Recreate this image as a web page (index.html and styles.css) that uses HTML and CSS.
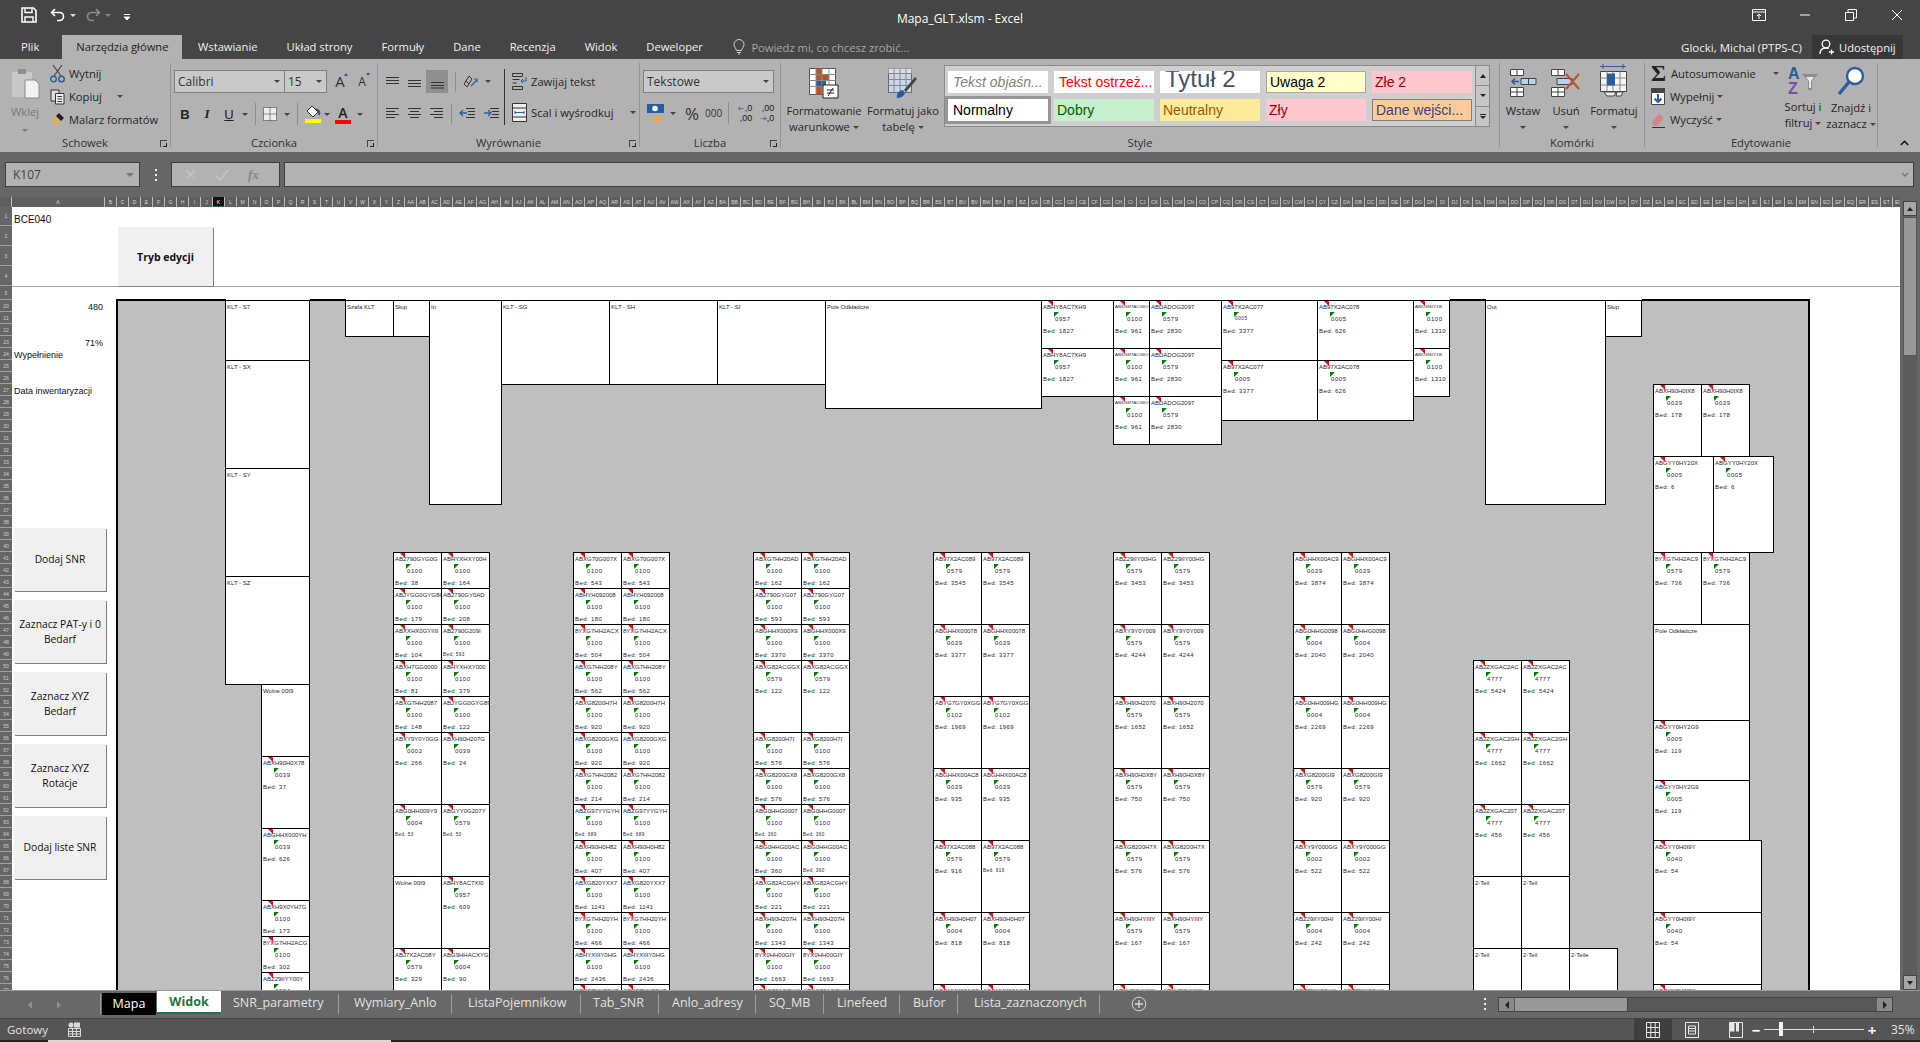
FILE: index.html
```html
<!DOCTYPE html>
<html lang="pl">
<head>
<meta charset="utf-8">
<title>Mapa_GLT.xlsm - Excel</title>
<link rel="stylesheet" href="styles.css">
</head>
<body>
<div class="app">

<header class="titlebar">
  <div class="qat">
    <svg class="wh" width="16" height="16" viewBox="0 0 16 16"><path d="M1 1h11.500L15 3.500V15H1z" stroke-width="1.600"/><path d="M4 1.500v4h7v-4M4 15v-5h8v5" stroke-width="1.400"/></svg>
    <svg class="wh undo" width="16" height="14" viewBox="0 0 16 14"><path d="M5 1L1.500 4.500 5 8M2 4.500h7.500a4 4 0 0 1 0 8H7" stroke-width="1.600"/></svg>
    <i class="caret lt"></i>
    <svg class="dim redo" width="16" height="14" viewBox="0 0 16 14"><path d="M11 1l3.500 3.500L11 8M14 4.500H6.500a4 4 0 0 0 0 8H9" stroke-width="1.600"/></svg>
    <i class="caret dimc"></i>
    <svg class="wh cust" width="8" height="8" viewBox="0 0 8 8"><path d="M1 1.500h6" stroke-width="1"/><path d="M1 4h6L4 7z" fill="#fff"/></svg>
  </div>
  <div class="doc-title">Mapa_GLT.xlsm - Excel</div>
  <div class="winctl">
    <span class="wbtn"><svg class="wh" width="14" height="12" viewBox="0 0 14 12"><path d="M.5.500h13v11H.5zM.5 3h13M7 10V5M5 7l2-2 2 2"/></svg></span>
    <span class="wbtn"><svg class="wh" width="12" height="12" viewBox="0 0 12 12"><path d="M1 6h10"/></svg></span>
    <span class="wbtn"><svg class="wh" width="12" height="12" viewBox="0 0 12 12"><path d="M.5 3.500h8v8h-8zM3 3.500V.5h8.500V9H8.500"/></svg></span>
    <span class="wbtn"><svg class="wh" width="12" height="12" viewBox="0 0 12 12"><path d="M1 1l10 10M11 1L1 11"/></svg></span>
  </div>
</header>

<nav class="tabs">
  <span class="tab plik">Plik</span>
  <span class="tab active">Narzędzia główne</span>
  <span class="tab">Wstawianie</span>
  <span class="tab">Układ strony</span>
  <span class="tab">Formuły</span>
  <span class="tab">Dane</span>
  <span class="tab">Recenzja</span>
  <span class="tab">Widok</span>
  <span class="tab">Deweloper</span>
  <svg class="bulb" width="12" height="16" viewBox="0 0 12 16"><path d="M3.500 11.500C3 9 1 8 1 5.500a5 5 0 0 1 10 0c0 2.500-2 3.500-2.500 6zM4 13.500h4M5 15h2" fill="none" stroke="#cfcfcf"/></svg>
  <span class="tell">Powiedz mi, co chcesz zrobić...</span>
  <span class="user">Glocki, Michal (PTPS-C)</span>
  <span class="share">
    <svg width="16" height="16" viewBox="0 0 16 16"><circle cx="7" cy="5" r="3.800" fill="none" stroke="#fff" stroke-width="1.300"/><path d="M1 15c0-4 2.500-6 6-6 1 0 2 .2 2.700.6M10 13h5M12.500 10.500v5" fill="none" stroke="#fff" stroke-width="1.300"/></svg>
    Udostępnij
  </span>
</nav>

<section class="ribbon">
  <div class="rgroup g-clip">
    <div class="rbody clip">
      <div class="paste">
        <svg width="30" height="32" viewBox="0 0 30 32"><path d="M2 5h20v25H2z" fill="#c8c8c8"/><path d="M8 2h8v5H8z" fill="#8f8f8f"/><path d="M15 13h10l4 4v14H15z" fill="#f2f2f2" stroke="#8a8a8a"/></svg>
        <span class="big-lbl off">Wklej</span>
        <i class="caret offc"></i>
      </div>
      <div class="cliplist">
        <span class="rrow"><svg width="15" height="19" viewBox="0 0 15 19"><path d="M3 1l8 11M12 1L4 12" fill="none" stroke="#444" stroke-width="1.200"/><circle cx="3.500" cy="15" r="2.800" fill="none" stroke="#2b5c9e" stroke-width="1.400"/><circle cx="11.500" cy="15" r="2.800" fill="none" stroke="#2b5c9e" stroke-width="1.400"/></svg>Wytnij</span>
        <span class="rrow"><svg width="15" height="16" viewBox="0 0 15 16"><path d="M1 1h8v11H1z" fill="#ddd" stroke="#333"/><path d="M5.500 4.500H14V15H5.500z" fill="#eee" stroke="#333"/><path d="M7.500 7.500h4.500M7.500 10h4.500M7.500 12.500h4.500" stroke="#333"/></svg>Kopiuj<i class="caret m8"></i></span>
        <span class="rrow"><svg width="15" height="15" viewBox="0 0 15 15"><path d="M1 9l5-5 5 5-4 5-3-1-1-2-2-1z" fill="#d9b06a"/><path d="M6 4l3-3 5 5-3 3z" fill="#222"/></svg>Malarz formatów</span>
      </div>
    </div>
    <div class="rlabel">Schowek</div>
    <i class="launcher"></i>
  </div>

  <div class="rgroup g-font">
    <div class="rbody stackb">
      <div class="frow1">
        <span class="combo fname">Calibri<i class="caret"></i></span><span class="combo fsize">15<i class="caret"></i></span>
        <span class="grow">A<i class="tri up"></i></span><span class="grow small">A<i class="tri down"></i></span>
      </div>
      <div class="frow2">
        <b class="fmt">B</b><em class="fmt">I</em><u class="fmt">U</u><i class="caret"></i><i class="vsep"></i>
        <svg class="border-ic" width="14" height="14" viewBox="0 0 14 14"><path d="M.5.500h13v13H.5zM7 .5v13M.5 7h13" fill="#eee" stroke="#333" stroke-dasharray="1 1"/></svg><i class="caret"></i><i class="vsep"></i>
        <svg class="fill-ic" width="16" height="18" viewBox="0 0 16 18"><path d="M7 1l6 6-5 5-6-6z" fill="#fff" stroke="#333"/><path d="M11 4c3 1 4 3 3 6" fill="none" stroke="#2b5c9e" stroke-width="2"/><path d="M0 14h16v4H0z" fill="#ff0"/></svg><i class="caret"></i>
        <span class="fontcolor">A</span><i class="caret"></i>
      </div>
    </div>
    <div class="rlabel">Czcionka</div>
    <i class="launcher"></i>
  </div>

  <div class="rgroup g-align">
    <div class="rbody alignbody">
      <div class="aligngrid">
        <div class="arow first">
          <svg class="ln" width="15" height="14" viewBox="0 0 15 14"><path d="M1 2.500h13M1 5.500h13M1 8.500h13"/></svg>
          <svg class="ln" width="15" height="14" viewBox="0 0 15 14"><path d="M1 5.500h13M1 8.500h13M1 11.500h13"/></svg>
          <span class="on"><svg class="ln" width="15" height="14" viewBox="0 0 15 14"><path d="M1 7.500h13M1 10.500h13M1 13h13"/></svg></span>
          <i class="vsep"></i>
          <svg width="15" height="15" viewBox="0 0 15 15"><path d="M1 10l5-8 3 3-5 8zM3 7l3 3" fill="none" stroke="#333"/><path d="M8 12l6-6M11 5h3v3" fill="none" stroke="#2b5c9e" stroke-width="1.200"/></svg><i class="caret"></i>
        </div>
        <div class="arow">
          <svg class="ln" width="15" height="13" viewBox="0 0 15 13"><path d="M1 1.500h13M1 4.500h9M1 7.500h13M1 10.500h9"/></svg>
          <svg class="ln" width="15" height="13" viewBox="0 0 15 13"><path d="M1 1.500h13M3 4.500h9M1 7.500h13M3 10.500h9"/></svg>
          <svg class="ln" width="15" height="13" viewBox="0 0 15 13"><path d="M1 1.500h13M5 4.500h9M1 7.500h13M5 10.500h9"/></svg>
          <i class="vsep second"></i>
          <svg width="17" height="13" viewBox="0 0 17 13"><path d="M7 1.500h9M9 4.500h7M9 7.500h7M7 10.500h9" stroke="#333" fill="none"/><path d="M1 6h7M4 3L1 6l3 3" stroke="#2b5c9e" stroke-width="1.300" fill="none"/></svg>
          <svg width="17" height="13" viewBox="0 0 17 13"><path d="M7 1.500h9M9 4.500h7M9 7.500h7M7 10.500h9" stroke="#333" fill="none"/><path d="M1 6h7M5 3l3 3-3 3" stroke="#2b5c9e" stroke-width="1.300" fill="none"/></svg>
        </div>
      </div>
      <i class="blacksep"></i>
      <div class="wrapcol">
        <span class="rrow"><svg width="15" height="18" viewBox="0 0 15 18"><path d="M.5 1.500h10v3H.5zM.5 7.500h7M.5 11h4M.5 14.500h10v3H.5z" fill="none" stroke="#333"/><path d="M14 5v4H9M11 7L9 9l2 2" fill="none" stroke="#2b5c9e"/></svg>Zawijaj tekst</span>
        <span class="rrow"><svg width="15" height="19" viewBox="0 0 15 19"><path d="M.5.500h14v18H.5zM.5 5h14M.5 14h14" fill="#eee" stroke="#333"/><path d="M3 9.500h9M3 8v3M12 8v3" stroke="#2b5c9e" fill="none"/></svg>Scal i wyśrodkuj<i class="caret m12"></i></span>
      </div>
    </div>
    <div class="rlabel">Wyrównanie</div>
    <i class="launcher"></i>
  </div>

  <div class="rgroup g-num">
    <div class="rbody stackb">
      <span class="combo fmtbox">Tekstowe<i class="caret"></i></span>
      <div class="nrow">
        <svg width="18" height="20" viewBox="0 0 18 20"><path d="M0 1h17v9H0z" fill="#2b5c9e"/><circle cx="8" cy="5.500" r="2.800" fill="#fff"/><path d="M6 13h8M6 15.500h8M6 18h8" stroke="#e0a75e" stroke-width="2"/></svg><i class="caret"></i>
        <span class="pct">%</span><span class="thou">000</span><i class="vsep"></i>
        <span class="dec"><span class="dl"><span class="arw">←</span>,0</span><span class="dl">,00</span></span>
        <span class="dec"><span class="dl">,00</span><span class="dl"><span class="arw">→</span>,0</span></span>
      </div>
    </div>
    <div class="rlabel">Liczba</div>
    <i class="launcher"></i>
  </div>

  <div class="rgroup g-style">
    <div class="rbody stylebody">
      <div class="bigbtn cf">
        <svg width="30" height="32" viewBox="0 0 30 32"><path d="M.5 1.500h26v26H.5z" fill="#fff" stroke="#555"/><path d="M7 1.500h6v6H7zM7 7.500h13v6H7z" fill="#c0502b"/><path d="M7 13.500h10v6H7z" fill="#2b5c9e"/><path d="M7 19.500h6v8H7z" fill="#c0502b"/><path d="M7 1.500v26M13 1.500v26M20 1.500v26M.5 7.500h26M.5 13.500h26M.5 19.500h26" fill="none" stroke="#888"/><path d="M14 18h15v13H14z" fill="#fff" stroke="#222"/><path d="M18 23h7M18 26h7M24 21l-5 8" stroke="#222" fill="none"/></svg>
        <span class="big-lbl">Formatowanie<br>warunkowe<i class="caret m3"></i></span>
      </div>
      <div class="bigbtn ft">
        <svg width="30" height="32" viewBox="0 0 30 32"><path d="M.5 1.500h23v24H.5z" fill="#c9d7ea" stroke="#666"/><path d="M.5 1.500h23v5H.5z" fill="#ddd"/><path d="M6 1.500v24M12 1.500v24M18 1.500v24M.5 6.500h23M.5 12.500h23M.5 18.500h23" fill="none" stroke="#888"/><path d="M9 31c-1-4 2-8 6-8l2 3c-1 3-4 5-8 5z" fill="#2b5c9e"/><path d="M16 23l11-13 2 2-11 13z" fill="#444"/></svg>
        <span class="big-lbl">Formatuj jako<br>tabelę<i class="caret m3"></i></span>
      </div>
      <div class="gallery">
        <div class="gcells">
          <span class="gc note-st">Tekst objaśn...</span>
          <span class="gc warn-st">Tekst ostrzeż...</span>
          <span class="gc title-st">Tytuł 2</span>
          <span class="gc att-st">Uwaga 2</span>
          <span class="gc bad-st">Złe 2</span>
          <span class="gc norm-st">Normalny</span>
          <span class="gc good-st">Dobry</span>
          <span class="gc neut-st">Neutralny</span>
          <span class="gc bad-st">Zły</span>
          <span class="gc input-st">Dane wejści...</span>
        </div>
        <div class="gscroll">
          <span class="gs1"><i class="caret up"></i></span>
          <span class="gs2"><i class="caret"></i></span>
          <span class="gs3"><i class="bar"></i><i class="caret"></i></span>
        </div>
      </div>
    </div>
    <div class="rlabel">Style</div>
  </div>

  <div class="rgroup g-cells">
    <div class="rbody cellsbody">
      <div class="bigbtn wstaw">
        <svg width="27" height="32" viewBox="0 0 27 32"><path d="M.5 3.500h13v6H.5zM7 3.500v6M.5 21.500h13v9H.5zM7 21.500v9M.5 26h13" fill="#fff" stroke="#444"/><path d="M11 12.500h15v6H11zM18.500 12.500v6" fill="#bcd2ec" stroke="#444"/><path d="M9 15.500H2M5 12.500l-3 3 3 3" fill="none" stroke="#2b5c9e" stroke-width="1.500"/></svg>
        <span class="big-lbl">Wstaw</span><i class="caret"></i>
      </div>
      <div class="bigbtn usun">
        <svg width="30" height="32" viewBox="0 0 30 32"><path d="M.5 3.500h13v6H.5zM7 3.500v6M.5 21.500h13v9H.5zM7 21.500v9M.5 26h13" fill="#fff" stroke="#444"/><path d="M6 12.500h15v6H6z" fill="#bcd2ec" stroke="#444"/><path d="M15 8l13 15M28 8L15 23" fill="none" stroke="#c0502b" stroke-width="2"/></svg>
        <span class="big-lbl">Usuń</span><i class="caret"></i>
      </div>
      <div class="bigbtn formatuj">
        <svg width="30" height="36" viewBox="0 0 30 36"><path d="M1 3.500h26M4 1v5M24 1v5M8 3.500l-3 0" stroke="#2b5c9e" fill="none"/><path d="M1.500 8.500h26v20h-26z" fill="#f4f4f4" stroke="#444"/><path d="M8 8.500v20M14 8.500v20M21 8.500v20M1.500 15h26M1.500 22h26" stroke="#888" fill="none"/><path d="M8 10.500h8v12H8z" fill="#2b5c9e"/><path d="M5 29h12l-2 4H8zM18 29h6l-2 4h-5z" fill="#eee" stroke="#444"/></svg>
        <span class="big-lbl">Formatuj</span><i class="caret"></i>
      </div>
    </div>
    <div class="rlabel">Komórki</div>
  </div>

  <div class="rgroup g-edit">
    <div class="rbody editbody">
      <div class="editlist">
        <span class="rrow"><span class="sigma">Σ</span>Autosumowanie<i class="caret m12"></i></span>
        <span class="rrow"><svg width="14" height="17" viewBox="0 0 14 17"><path d="M0 0h14v4H0z" fill="#444"/><path d="M.5 4.500h13v12H.5z" fill="#fff" stroke="#444"/><path d="M7 6v8M3.500 10.500L7 14l3.500-3.500" fill="none" stroke="#2b5c9e" stroke-width="2"/></svg>Wypełnij<i class="caret tight"></i></span>
        <span class="rrow"><svg width="14" height="16" viewBox="0 0 14 16"><path d="M1 10l7-8 5 4-7 8H3z" fill="#d9818d"/><path d="M1 15.500h13" stroke="#333"/></svg>Wyczyść<i class="caret tight"></i></span>
      </div>
      <div class="bigbtn sort">
        <span class="az"><span class="az-a">A</span><span class="az-z">Z</span><svg width="18" height="18" viewBox="0 0 18 18"><path d="M1 1h16l-6 7v9H7V8z" fill="#8d8d8d"/><path d="M5 4h8l-3 4v7H8V8z" fill="#e8e8e8"/></svg></span>
        <span class="big-lbl">Sortuj i<br>filtruj<i class="caret m3"></i></span>
      </div>
      <div class="bigbtn find">
        <svg width="28" height="30" viewBox="0 0 28 30"><circle cx="18" cy="10" r="8" fill="#fff" stroke="#2b5c9e" stroke-width="2.400"/><path d="M12 16L2 28" stroke="#2b5c9e" stroke-width="3.400"/></svg>
        <span class="big-lbl">Znajdź i<br>zaznacz<i class="caret m3"></i></span>
      </div>
    </div>
    <div class="rlabel">Edytowanie</div>
  </div>
  <svg class="collapse" width="9" height="6" viewBox="0 0 9 6"><path d="M.8 5l3.700-3.700L8.200 5" fill="none" stroke="#111" stroke-width="1.600"/></svg>
</section>

<section class="formula">
  <div class="namebox">K107<i class="caret"></i></div>
  <div class="fdots"><i></i><i></i><i></i></div>
  <div class="fbtns">
    <svg width="11" height="11" viewBox="0 0 11 11"><path d="M1 1l9 9M10 1l-9 9" stroke="#c2c2c2" stroke-width="1.500"/></svg>
    <svg width="14" height="12" viewBox="0 0 14 12"><path d="M1 7l4 4 8-10" fill="none" stroke="#c2c2c2" stroke-width="1.800"/></svg>
    <span class="fx">fx</span>
  </div>
  <div class="fbar"><svg width="8" height="6" viewBox="0 0 8 6"><path d="M1 1l3 3 3-3" fill="none" stroke="#777" stroke-width="1.500"/></svg></div>
</section>

<section class="workbook">
  <div class="pane">
    <div class="colhdr">
      <span class="corner"></span><span class="col-a">A</span><span>B</span><span>C</span><span>D</span><span>E</span><span>F</span><span>G</span><span>H</span><span>I</span><span>J</span><span class="sel">K</span><span>L</span><span>M</span><span>N</span><span>O</span><span>P</span><span>Q</span><span>R</span><span>S</span><span>T</span><span>U</span><span>V</span><span>W</span><span>X</span><span>Y</span><span>Z</span>
      <span>AA</span><span>AB</span><span>AC</span><span>AD</span><span>AE</span><span>AF</span><span>AG</span><span>AH</span><span>AI</span><span>AJ</span><span>AK</span><span>AL</span><span>AM</span><span>AN</span><span>AO</span><span>AP</span><span>AQ</span><span>AR</span><span>AS</span><span>AT</span><span>AU</span><span>AV</span><span>AW</span><span>AX</span><span>AY</span><span>AZ</span>
      <span>BA</span><span>BB</span><span>BC</span><span>BD</span><span>BE</span><span>BF</span><span>BG</span><span>BH</span><span>BI</span><span>BJ</span><span>BK</span><span>BL</span><span>BM</span><span>BN</span><span>BO</span><span>BP</span><span>BQ</span><span>BR</span><span>BS</span><span>BT</span><span>BU</span><span>BV</span><span>BW</span><span>BX</span><span>BY</span><span>BZ</span>
      <span>CA</span><span>CB</span><span>CC</span><span>CD</span><span>CE</span><span>CF</span><span>CG</span><span>CH</span><span>CI</span><span>CJ</span><span>CK</span><span>CL</span><span>CM</span><span>CN</span><span>CO</span><span>CP</span><span>CQ</span><span>CR</span><span>CS</span><span>CT</span><span>CU</span><span>CV</span><span>CW</span><span>CX</span><span>CY</span><span>CZ</span>
      <span>DA</span><span>DB</span><span>DC</span><span>DD</span><span>DE</span><span>DF</span><span>DG</span><span>DH</span><span>DI</span><span>DJ</span><span>DK</span><span>DL</span><span>DM</span><span>DN</span><span>DO</span><span>DP</span><span>DQ</span><span>DR</span><span>DS</span><span>DT</span><span>DU</span><span>DV</span><span>DW</span><span>DX</span><span>DY</span><span>DZ</span>
      <span>EA</span><span>EB</span><span>EC</span><span>ED</span><span>EE</span><span>EF</span><span>EG</span><span>EH</span><span>EI</span><span>EJ</span><span>EK</span><span>EL</span><span>EM</span><span>EN</span><span>EO</span><span>EP</span><span>EQ</span><span>ER</span><span>ES</span><span>ET</span><span>EU</span>
    </div>
    <div class="sheetwrap">
      <div class="rowhdr">
        <span class="rh1">1</span><span class="rh2">2</span><span class="rh2">3</span><span class="rh2">4</span><span class="rh5">5</span>
        <span>20</span><span>21</span><span>22</span><span>23</span><span>24</span><span>25</span><span>26</span><span>27</span><span>28</span><span>29</span><span>30</span><span>31</span><span>32</span><span>33</span><span>34</span><span>35</span><span>36</span><span>37</span><span>38</span><span>39</span><span>40</span><span>41</span><span>42</span><span>43</span><span>44</span><span>45</span><span>46</span><span>47</span><span>48</span><span>49</span><span>50</span><span>51</span><span>52</span><span>53</span><span>54</span><span>55</span><span>56</span><span>57</span><span>58</span><span>59</span><span>60</span><span>61</span><span>62</span><span>63</span><span>64</span><span>65</span><span>66</span><span>67</span><span>68</span><span>69</span><span>70</span><span>71</span><span>72</span><span>73</span><span>74</span><span>75</span><span>76</span><span>77</span>
      </div>
      <div class="sheet">
        <div class="frozen">
          <div class="code">BCE040</div>
          <button class="xbtn edit">Tryb edycji</button>
        </div>
        <div class="gap5"></div>
        <div class="content">
          <aside class="side">
            <div class="val">480</div>
            <div class="val v71">71%</div>
            <div class="lab">Wypełnienie</div>
            <div class="lab l-data">Data inwentaryzacji</div>
            <div class="actions">
              <button class="xbtn act">Dodaj SNR</button>
              <button class="xbtn act">Zaznacz PAT-y i 0<br>Bedarf</button>
              <button class="xbtn act">Zaznacz XYZ<br>Bedarf</button>
              <button class="xbtn act">Zaznacz XYZ<br>Rotacje</button>
              <button class="xbtn act">Dodaj liste SNR</button>
            </div>
          </aside>

          <div class="map">
            <div class="grp g-klt">
              <div class="stack w7">
                <div class="slot s5"><span>KLT - S7</span></div>
                <div class="slot s9"><span>KLT - SX</span></div>
                <div class="slot s9"><span>KLT - SY</span></div>
                <div class="slot s9"><span>KLT - SZ</span></div>
              </div>
            </div>
            <div class="grp g-wolne">
              <div class="stack w4">
                <div class="slot s6"><span>Wolne 00I9</span></div>
                <div class="slot s6 part"><span>ABXH90H0X78</span><span>0039</span><span>Bed: 37</span></div>
                <div class="slot s6 part"><span>ABGHHX000YH</span><span>0039</span><span>Bed: 626</span></div>
                <div class="slot s3 part"><span>ABXH9X0YH7G</span><span>0100</span><span>Bed: 173</span></div>
                <div class="slot s3 part"><span>8YXG7HH2ACG</span><span>0100</span><span>Bed: 302</span></div>
                <div class="slot s3 part"><span>ABZ29IIYY00Y</span><span>0004</span><span>Bed: 90</span></div>
              </div>
            </div>
            <div class="grp g-top">
              <div class="stack w4"><div class="slot s3"><span>Szafa KLT</span></div></div>
              <div class="stack w3"><div class="slot s3"><span>Słup</span></div></div>
              <div class="stack w6"><div class="slot s17"><span>In</span></div></div>
              <div class="stack w9"><div class="slot s7"><span>KLT - SG</span></div></div>
              <div class="stack w9"><div class="slot s7"><span>KLT - SH</span></div></div>
              <div class="stack w9"><div class="slot s7"><span>KLT - SI</span></div></div>
              <div class="stack w18"><div class="slot s9"><span>Pole Odkładcze</span></div></div>
            </div>
            <div class="grp g-store">
              <div class="stack w6">
                <div class="slot s4 part"><span>ABHY8AC7XH9</span><span>0957</span><span>Bed: 1827</span></div>
                <div class="slot s4 part"><span>ABHY8AC7XH9</span><span>0957</span><span>Bed: 1827</span></div>
              </div>
              <div class="stack w3">
                <div class="slot s4 part tiny"><span>ABXG8I7ACGIIO</span><span>0100</span><span>Bed: 961</span></div>
                <div class="slot s4 part tiny"><span>ABXG8I7ACGIIO</span><span>0100</span><span>Bed: 961</span></div>
                <div class="slot s4 part tiny"><span>ABXG8I7ACGIIO</span><span>0100</span><span>Bed: 961</span></div>
              </div>
              <div class="stack w6">
                <div class="slot s4 part"><span>ABDADOG2097</span><span>0579</span><span>Bed: 2830</span></div>
                <div class="slot s4 part"><span>ABDADOG2097</span><span>0579</span><span>Bed: 2830</span></div>
                <div class="slot s4 part"><span>ABDADOG2097</span><span>0579</span><span>Bed: 2830</span></div>
              </div>
              <div class="stack w8">
                <div class="slot s5 part"><span>AB97X2AC077</span><span class="mini">0005</span><span>Bed: 3377</span></div>
                <div class="slot s5 part"><span>AB97X2AC077</span><span>0005</span><span>Bed: 3377</span></div>
              </div>
              <div class="stack w8">
                <div class="slot s5 part"><span>AB97X2AC078</span><span>0005</span><span>Bed: 626</span></div>
                <div class="slot s5 part"><span>AB97X2AC078</span><span>0005</span><span>Bed: 626</span></div>
              </div>
              <div class="stack w3">
                <div class="slot s4 part tiny"><span>ABXG8I0Y18I</span><span>0100</span><span>Bed: 1310</span></div>
                <div class="slot s4 part tiny"><span>ABXG8I0Y18I</span><span>0100</span><span>Bed: 1310</span></div>
              </div>
            </div>
            <div class="grp g-out">
              <div class="stack w10"><div class="slot s17"><span>Out</span></div></div>
              <div class="stack w3"><div class="slot s3"><span>Słup</span></div></div>
            </div>

            <div class="grp g-1">
              <div class="stack w4">
                <div class="slot s3 part"><span>AB2790GYG0G</span><span>0100</span><span>Bed: 38</span></div>
                <div class="slot s3 part"><span>ABJYGG0GYG8I</span><span>0100</span><span>Bed: 179</span></div>
                <div class="slot s3 part"><span>ABXXHX0GYII9</span><span>0100</span><span>Bed: 104</span></div>
                <div class="slot s3 part"><span>ABXH7GG0000</span><span>0100</span><span>Bed: 81</span></div>
                <div class="slot s3 part"><span>ABXG7HH2087</span><span>0100</span><span>Bed: 148</span></div>
                <div class="slot s6 part"><span>ABXY9Y0Y0GG</span><span>0002</span><span>Bed: 266</span></div>
                <div class="slot s6 part"><span>ABG0HH009Y9</span><span>0004</span><span class="mini">Bed: 53</span></div>
                <div class="slot s6"><span>Wolne 00I9</span></div>
                <div class="slot s6 part"><span>ABJ7X2AC08Y</span><span>0579</span><span>Bed: 329</span></div>
              </div>
              <div class="stack w4">
                <div class="slot s3 part"><span>ABHYXHXY00H</span><span>0100</span><span>Bed: 164</span></div>
                <div class="slot s3 part"><span>AB2790GY0AD</span><span>0100</span><span>Bed: 208</span></div>
                <div class="slot s3 part"><span>AB2790G209I</span><span>0100</span><span class="mini">Bed: 593</span></div>
                <div class="slot s3 part"><span>ABHYXHXY000</span><span>0100</span><span>Bed: 379</span></div>
                <div class="slot s3 part"><span>ABJYGG0GYG89</span><span>0100</span><span>Bed: 122</span></div>
                <div class="slot s6 part"><span>ABXH90H207G</span><span>0039</span><span>Bed: 24</span></div>
                <div class="slot s6 part"><span>ABGYY0G207Y</span><span>0579</span><span class="mini">Bed: 50</span></div>
                <div class="slot s6 part"><span>ABHY8AC7XI0</span><span>0957</span><span>Bed: 609</span></div>
                <div class="slot s6 part"><span>ABG9HHACXYG</span><span>0004</span><span>Bed: 90</span></div>
              </div>
            </div>

            <div class="grp g-2">
              <div class="stack w4">
                <div class="slot s3 part"><span>ABXG70G007X</span><span>0100</span><span>Bed: 543</span></div>
                <div class="slot s3 part"><span>ABHYH092008</span><span>0100</span><span>Bed: 180</span></div>
                <div class="slot s3 part"><span>8YXG7HH2ACX</span><span>0100</span><span>Bed: 504</span></div>
                <div class="slot s3 part"><span>ABXG7HH208Y</span><span>0100</span><span>Bed: 562</span></div>
                <div class="slot s3 part"><span>ABXG8200H7H</span><span>0100</span><span>Bed: 920</span></div>
                <div class="slot s3 part"><span>ABXG8200GXG</span><span>0100</span><span>Bed: 920</span></div>
                <div class="slot s3 part"><span>ABXG7HH2082</span><span>0100</span><span>Bed: 214</span></div>
                <div class="slot s3 part"><span>ABZG97YYGYH</span><span>0100</span><span class="mini">Bed: 689</span></div>
                <div class="slot s3 part"><span>ABXH90H0H82</span><span>0100</span><span>Bed: 407</span></div>
                <div class="slot s3 part"><span>ABXG820YXX7</span><span>0100</span><span>Bed: 1141</span></div>
                <div class="slot s3 part"><span>8YXG7HH20YH</span><span>0100</span><span>Bed: 466</span></div>
                <div class="slot s3 part"><span>ABHYXIIIY0HG</span><span>0100</span><span>Bed: 2436</span></div>
                <div class="slot s3 part"><span>ABXG7HH20H7</span><span>0100</span><span>Bed: 214</span></div>
              </div>
              <div class="stack w4">
                <div class="slot s3 part"><span>ABXG70G007X</span><span>0100</span><span>Bed: 543</span></div>
                <div class="slot s3 part"><span>ABHYH092008</span><span>0100</span><span>Bed: 180</span></div>
                <div class="slot s3 part"><span>8YXG7HH2ACX</span><span>0100</span><span>Bed: 504</span></div>
                <div class="slot s3 part"><span>ABXG7HH208Y</span><span>0100</span><span>Bed: 562</span></div>
                <div class="slot s3 part"><span>ABXG8200H7H</span><span>0100</span><span>Bed: 920</span></div>
                <div class="slot s3 part"><span>ABXG8200GXG</span><span>0100</span><span>Bed: 920</span></div>
                <div class="slot s3 part"><span>ABXG7HH2082</span><span>0100</span><span>Bed: 214</span></div>
                <div class="slot s3 part"><span>ABZG97YYGYH</span><span>0100</span><span class="mini">Bed: 689</span></div>
                <div class="slot s3 part"><span>ABXH90H0H82</span><span>0100</span><span>Bed: 407</span></div>
                <div class="slot s3 part"><span>ABXG820YXX7</span><span>0100</span><span>Bed: 1141</span></div>
                <div class="slot s3 part"><span>8YXG7HH20YH</span><span>0100</span><span>Bed: 466</span></div>
                <div class="slot s3 part"><span>ABHYXIIIY0HG</span><span>0100</span><span>Bed: 2436</span></div>
                <div class="slot s3 part"><span>ABXG7HH20H7</span><span>0100</span><span>Bed: 214</span></div>
              </div>
            </div>

            <div class="grp g-3">
              <div class="stack w4">
                <div class="slot s3 part"><span>ABXG7HH20AD</span><span>0100</span><span>Bed: 162</span></div>
                <div class="slot s3 part"><span>AB2790GYG07</span><span>0100</span><span>Bed: 593</span></div>
                <div class="slot s3 part"><span>ABGHHX000X9</span><span>0100</span><span>Bed: 3370</span></div>
                <div class="slot s6 part"><span>ABXG82ACGGX</span><span>0579</span><span>Bed: 122</span></div>
                <div class="slot s3 part"><span>ABXG8200H7I</span><span>0100</span><span>Bed: 576</span></div>
                <div class="slot s3 part"><span>ABXG8200GX8</span><span>0100</span><span>Bed: 576</span></div>
                <div class="slot s3 part"><span>ABG0HHG0007</span><span>0100</span><span class="mini">Bed: 360</span></div>
                <div class="slot s3 part"><span>ABG0HHG00AC</span><span>0100</span><span>Bed: 360</span></div>
                <div class="slot s3 part"><span>ABXG82ACGHY</span><span>0100</span><span>Bed: 221</span></div>
                <div class="slot s3 part"><span>ABXH90H207H</span><span>0100</span><span>Bed: 1343</span></div>
                <div class="slot s3 part"><span>8YX0HH00GIY</span><span>0100</span><span>Bed: 1663</span></div>
                <div class="slot s3 part"><span>ABXG82ACGHX</span><span>0100</span><span>Bed: 221</span></div>
              </div>
              <div class="stack w4">
                <div class="slot s3 part"><span>ABXG7HH20AD</span><span>0100</span><span>Bed: 162</span></div>
                <div class="slot s3 part"><span>AB2790GYG07</span><span>0100</span><span>Bed: 593</span></div>
                <div class="slot s3 part"><span>ABGHHX000X9</span><span>0100</span><span>Bed: 3370</span></div>
                <div class="slot s6 part"><span>ABXG82ACGGX</span><span>0579</span><span>Bed: 122</span></div>
                <div class="slot s3 part"><span>ABXG8200H7I</span><span>0100</span><span>Bed: 576</span></div>
                <div class="slot s3 part"><span>ABXG8200GX8</span><span>0100</span><span>Bed: 576</span></div>
                <div class="slot s3 part"><span>ABG0HHG0007</span><span>0100</span><span class="mini">Bed: 360</span></div>
                <div class="slot s3 part"><span>ABG0HHG00AC</span><span>0100</span><span class="mini">Bed: 360</span></div>
                <div class="slot s3 part"><span>ABXG82ACGHY</span><span>0100</span><span>Bed: 221</span></div>
                <div class="slot s3 part"><span>ABXH90H207H</span><span>0100</span><span>Bed: 1343</span></div>
                <div class="slot s3 part"><span>8YX0HH00GIY</span><span>0100</span><span>Bed: 1663</span></div>
                <div class="slot s3 part"><span>ABXG82ACGHX</span><span>0100</span><span>Bed: 221</span></div>
              </div>
            </div>

            <div class="grp g-4">
              <div class="stack w4">
                <div class="slot s6 part"><span>AB97X2AC089</span><span>0579</span><span>Bed: 3545</span></div>
                <div class="slot s6 part"><span>ABGHHX00078</span><span>0039</span><span>Bed: 3377</span></div>
                <div class="slot s6 part"><span>ABYG7GY0XGG</span><span>0102</span><span>Bed: 1969</span></div>
                <div class="slot s6 part"><span>ABGHHX00AC8</span><span>0039</span><span>Bed: 935</span></div>
                <div class="slot s6 part"><span>AB97X2AC088</span><span>0579</span><span>Bed: 916</span></div>
                <div class="slot s6 part"><span>ABXH90H0H07</span><span>0004</span><span>Bed: 818</span></div>
                <div class="slot s6 part"><span>ABGHHX00AC7</span><span>0039</span><span>Bed: 935</span></div>
              </div>
              <div class="stack w4">
                <div class="slot s6 part"><span>AB97X2AC089</span><span>0579</span><span>Bed: 3545</span></div>
                <div class="slot s6 part"><span>ABGHHX00078</span><span>0039</span><span>Bed: 3377</span></div>
                <div class="slot s6 part"><span>ABYG7GY0XGG</span><span>0102</span><span>Bed: 1969</span></div>
                <div class="slot s6 part"><span>ABGHHX00AC8</span><span>0039</span><span>Bed: 935</span></div>
                <div class="slot s6 part"><span>AB97X2AC088</span><span>0579</span><span class="mini">Bed: 916</span></div>
                <div class="slot s6 part"><span>ABXH90H0H07</span><span>0004</span><span>Bed: 818</span></div>
                <div class="slot s6 part"><span>ABGHHX00AC7</span><span>0039</span><span>Bed: 935</span></div>
              </div>
            </div>

            <div class="grp g-5">
              <div class="stack w4">
                <div class="slot s6 part"><span>ABZ29IIY00HG</span><span>0579</span><span>Bed: 3453</span></div>
                <div class="slot s6 part"><span>ABXY9Y0Y009</span><span>0579</span><span>Bed: 4244</span></div>
                <div class="slot s6 part"><span>ABXH90H2070</span><span>0579</span><span>Bed: 1652</span></div>
                <div class="slot s6 part"><span>ABXH90H0X8Y</span><span>0579</span><span>Bed: 750</span></div>
                <div class="slot s6 part"><span>ABXG8200H7X</span><span>0579</span><span>Bed: 576</span></div>
                <div class="slot s6 part"><span>ABXH90HYIIIY</span><span>0579</span><span>Bed: 167</span></div>
                <div class="slot s6 part"><span>ABXH90HYIIIX</span><span>0579</span><span>Bed: 167</span></div>
              </div>
              <div class="stack w4">
                <div class="slot s6 part"><span>ABZ29IIY00HG</span><span>0579</span><span>Bed: 3453</span></div>
                <div class="slot s6 part"><span>ABXY9Y0Y009</span><span>0579</span><span>Bed: 4244</span></div>
                <div class="slot s6 part"><span>ABXH90H2070</span><span>0579</span><span>Bed: 1652</span></div>
                <div class="slot s6 part"><span>ABXH90H0X8Y</span><span>0579</span><span>Bed: 750</span></div>
                <div class="slot s6 part"><span>ABXG8200H7X</span><span>0579</span><span>Bed: 576</span></div>
                <div class="slot s6 part"><span>ABXH90HYIIIY</span><span>0579</span><span>Bed: 167</span></div>
                <div class="slot s6 part"><span>ABXH90HYIIIX</span><span>0579</span><span>Bed: 167</span></div>
              </div>
            </div>

            <div class="grp g-6">
              <div class="stack w4">
                <div class="slot s6 part"><span>ABGHHX00AC9</span><span>0039</span><span>Bed: 3874</span></div>
                <div class="slot s6 part"><span>ABG0HHG0098</span><span>0004</span><span>Bed: 2040</span></div>
                <div class="slot s6 part"><span>ABG0HH009HG</span><span>0004</span><span>Bed: 2269</span></div>
                <div class="slot s6 part"><span>ABXG8200GI9</span><span>0579</span><span>Bed: 920</span></div>
                <div class="slot s6 part"><span>ABXY9Y000GG</span><span>0002</span><span>Bed: 522</span></div>
                <div class="slot s6 part"><span>ABZ29IIY00HI</span><span>0004</span><span>Bed: 242</span></div>
                <div class="slot s6 part"><span>ABZ29IIY00HX</span><span>0004</span><span>Bed: 242</span></div>
              </div>
              <div class="stack w4">
                <div class="slot s6 part"><span>ABGHHX00AC9</span><span>0039</span><span>Bed: 3874</span></div>
                <div class="slot s6 part"><span>ABG0HHG0098</span><span>0004</span><span>Bed: 2040</span></div>
                <div class="slot s6 part"><span>ABG0HH009HG</span><span>0004</span><span>Bed: 2269</span></div>
                <div class="slot s6 part"><span>ABXG8200GI9</span><span>0579</span><span>Bed: 920</span></div>
                <div class="slot s6 part"><span>ABXY9Y000GG</span><span>0002</span><span>Bed: 522</span></div>
                <div class="slot s6 part"><span>ABZ29IIY00HI</span><span>0004</span><span>Bed: 242</span></div>
                <div class="slot s6 part"><span>ABZ29IIY00HX</span><span>0004</span><span>Bed: 242</span></div>
              </div>
            </div>

            <div class="grp g-7">
              <div class="stack w4">
                <div class="slot s6 part"><span>AB2ZXGAC2AC</span><span>4777</span><span>Bed: 5424</span></div>
                <div class="slot s6 part"><span>AB2ZXGAC2GH</span><span>4777</span><span>Bed: 1662</span></div>
                <div class="slot s6 part"><span>AB2ZXGAC207</span><span>4777</span><span>Bed: 456</span></div>
                <div class="slot s6"><span>2-Teil</span></div>
                <div class="slot s6"><span>2-Teil</span></div>
              </div>
              <div class="stack w4">
                <div class="slot s6 part"><span>AB2ZXGAC2AC</span><span>4777</span><span>Bed: 5424</span></div>
                <div class="slot s6 part"><span>AB2ZXGAC2GH</span><span>4777</span><span>Bed: 1662</span></div>
                <div class="slot s6 part"><span>AB2ZXGAC207</span><span>4777</span><span>Bed: 456</span></div>
                <div class="slot s6"><span>2-Teil</span></div>
                <div class="slot s6"><span>2-Teil</span></div>
              </div>
            </div>
            <div class="grp g-7b">
              <div class="stack w4"><div class="slot s6"><span>2-Teile</span></div></div>
            </div>

            <div class="grp g-ra">
              <div class="stack w4"><div class="slot s6 part"><span>ABXH90H0IX8</span><span>0039</span><span>Bed: 178</span></div></div>
              <div class="stack w4"><div class="slot s6 part"><span>ABXH90H0IX8</span><span>0039</span><span>Bed: 178</span></div></div>
            </div>
            <div class="grp g-rb">
              <div class="stack w5"><div class="slot s8 part"><span>ABGYY0HY20X</span><span>0005</span><span>Bed: 6</span></div></div>
              <div class="stack w5"><div class="slot s8 part"><span>ABGYY0HY20X</span><span>0005</span><span>Bed: 6</span></div></div>
            </div>
            <div class="grp g-rc">
              <div class="stack w4"><div class="slot s6 part"><span>8YXG7HH2AC9</span><span>0579</span><span>Bed: 736</span></div></div>
              <div class="stack w4"><div class="slot s6 part"><span>8YXG7HH2AC9</span><span>0579</span><span>Bed: 736</span></div></div>
            </div>
            <div class="grp g-rd">
              <div class="stack w8">
                <div class="slot s8"><span>Pole Odkładcze</span></div>
                <div class="slot s5 part"><span>ABGYY0HY2G9</span><span>0005</span><span>Bed: 119</span></div>
                <div class="slot s5 part"><span>ABGYY0HY2G9</span><span>0005</span><span>Bed: 119</span></div>
              </div>
            </div>
            <div class="grp g-re">
              <div class="stack w9">
                <div class="slot s6 part"><span>ABGYY0H0I9Y</span><span>0040</span><span>Bed: 54</span></div>
                <div class="slot s6 part"><span>ABGYY0H0I9Y</span><span>0040</span><span>Bed: 54</span></div>
                <div class="slot s6 part"><span>ABGYY0H0I9X</span><span>0040</span><span>Bed: 54</span></div>
              </div>
            </div>
          </div>
        </div>
      </div>
    </div>
  </div>
  <div class="vscroll">
    <span class="sbtn"><i class="caret up"></i></span>
    <span class="vthumb"></span>
    <span class="vtrack"></span>
    <span class="sbtn"><i class="caret dark"></i></span>
  </div>
</section>

<footer class="sheetbar">
  <div class="navs">
    <svg width="6" height="10" viewBox="0 0 6 10"><path d="M5 1L1 5l4 4z" fill="#8f8f8f"/></svg>
    <svg width="6" height="10" viewBox="0 0 6 10"><path d="M1 1l4 4-4 4z" fill="#8f8f8f"/></svg>
  </div>
  <i class="tsep"></i>
  <span class="stab mapa">Mapa</span>
  <span class="stab widok">Widok</span>
  <span class="stab s-snr">SNR_parametry</span><i class="tsep"></i>
  <span class="stab s-wym">Wymiary_Anlo</span><i class="tsep"></i>
  <span class="stab s-lis">ListaPojemnikow</span><i class="tsep"></i>
  <span class="stab s-tab">Tab_SNR</span><i class="tsep"></i>
  <span class="stab s-anl">Anlo_adresy</span><i class="tsep"></i>
  <span class="stab s-sq">SQ_MB</span><i class="tsep"></i>
  <span class="stab s-lin">Linefeed</span><i class="tsep"></i>
  <span class="stab s-buf">Bufor</span><i class="tsep"></i>
  <span class="stab s-zaz">Lista_zaznaczonych</span><i class="tsep"></i>
  <svg class="addsheet" width="16" height="16" viewBox="0 0 16 16"><circle cx="8" cy="8" r="6.800" fill="none" stroke="#d8d8d8"/><path d="M8 4v8M4 8h8" stroke="#d8d8d8" stroke-width="1.300"/></svg>
  <div class="hdots"><i></i><i></i><i></i></div>
  <div class="hscroll">
    <span class="hbtn"><svg width="6" height="10" viewBox="0 0 6 10"><path d="M5 1L1 5l4 4z" fill="#222"/></svg></span>
    <span class="hthumb"></span>
    <span class="htrack"></span>
    <span class="hbtn"><svg width="6" height="10" viewBox="0 0 6 10"><path d="M1 1l4 4-4 4z" fill="#222"/></svg></span>
  </div>
</footer>

<div class="status">
  <span class="ready">Gotowy</span>
  <svg class="macro" width="13" height="15" viewBox="0 0 13 15"><circle cx="3" cy="3" r="2.500" fill="#d9d9d9"/><path d="M6 .5h6v5H6z" fill="#d9d9d9"/><path d="M.5 6.500h12v8H.5zM.5 9.500h12M.5 12h12M4.500 6.500v8M8.500 6.500v8" fill="none" stroke="#d9d9d9"/></svg>
  <div class="views">
    <span class="view on"><svg width="14" height="16" viewBox="0 0 14 16"><path d="M.5.500h13v15H.5zM.5 5.500h13M.5 10.500h13M4.800.5v15M9.200.5v15" fill="none" stroke="#e8e8e8"/></svg></span>
    <span class="view"><svg width="14" height="16" viewBox="0 0 14 16"><path d="M.5.500h13v15H.5zM3.500 4h7v8h-7zM3.500 6.500h7M3.500 9h7" fill="none" stroke="#e8e8e8"/></svg></span>
    <span class="view"><svg width="14" height="16" viewBox="0 0 14 16"><path d="M.5.500h13v15H.5z" fill="none" stroke="#e8e8e8"/><path d="M.5.500h5v9h-5zM7 .5h3v9H7z" fill="#e8e8e8"/></svg></span>
  </div>
  <span class="zbtn">−</span>
  <span class="slider"><i class="knob"></i><i class="tick"></i></span>
  <span class="zbtn plus">+</span>
  <span class="zoomval">35%</span>
</div>
<div class="taskstrip"><span></span></div>

</div>
</body>
</html>
```

FILE: styles.css
```css
* { box-sizing: border-box; }
html, body { margin: 0; padding: 0; }
body { width: 1920px; height: 1042px; overflow: hidden; background: #444; font-family: "Open Sans", "Liberation Sans", sans-serif; font-size: 11.2px; color: #262626; }
.app { width: 1920px; height: 1042px; display: flex; flex-direction: column; overflow: hidden; }
svg { flex: none; display: block; }
i { display: block; font-style: normal; flex: none; }

.caret { width: 0; height: 0; border-left: 3px solid transparent; border-right: 3px solid transparent; border-top: 3px solid #444; }
.caret.up { border-top: 0; border-bottom: 4px solid #222; }
.caret.dark { border-top-color: #222; border-top-width: 4px; }
.caret.lt { border-top-color: #ddd; }
.caret.dimc { border-top-color: #888; }
.caret.offc { border-top-color: #808080; }
.m3 { display: inline-block; margin-left: 3px; vertical-align: 2px; }
.m8 { margin-left: 11px; }
.m12 { margin-left: 12px; }
.tight { margin-left: -2px; }

/* title */
.titlebar { height: 35px; flex: none; background: #454545; display: grid; grid-template-columns: 1fr auto 1fr; align-items: center; color: #fff; }
.qat { display: flex; align-items: center; padding: 0 0 5px 21px; }
.wh { fill: none; stroke: #fff; }
.dim { fill: none; stroke: #8a8a8a; }
.undo { margin-left: 13px; }
.qat .caret.lt { margin: 0 0 0 4px; }
.redo { margin-left: 9px; }
.qat .caret.dimc { margin-left: 4px; }
.cust { margin-left: 12px; margin-top: 4px; }
.doc-title { font-size: 12px; color: #fff; padding-top: 1px; }
.winctl { display: flex; justify-content: flex-end; padding-bottom: 5px; }
.wbtn { width: 46px; display: flex; justify-content: center; }

/* tabs */
.tabs { height: 24px; flex: none; background: #454545; display: flex; align-items: center; color: #f0f0f0; padding-left: 7px; }
.tab { height: 24px; line-height: 24px; padding: 0 14.5px; white-space: nowrap; }
.tab.plik { margin-right: 9px; padding: 0 14px; }
.tab.active { background: #b2b2b2; color: #222; padding: 0 14px; margin-right: 1px; }
.bulb { margin-left: 16px; }
.tell { color: #a6a6a6; margin-left: 6px; }
.user { margin-left: auto; color: #f0f0f0; margin-right: 10px; font-size: 11.500px; }
.share { width: 91px; height: 24px; background: #383838; color: #f4f4f4; margin-right: 17px; display: flex; align-items: center; gap: 4px; padding-left: 7px; }

/* ribbon */
.ribbon { height: 93px; flex: none; background: #b2b2b2; display: flex; padding-top: 4px; position: relative; }
.rgroup { height: 84px; flex: none; border-right: 1px solid #949494; display: flex; flex-direction: column; position: relative; }
.rbody { height: 68px; flex: none; }
.rlabel { margin-top: 4px; height: 16px; line-height: 16px; text-align: center; color: #303030; }
.launcher { position: absolute; right: 3px; bottom: 0; width: 7px; height: 7px; border-left: 1px solid #444; border-top: 1px solid #444; }
.launcher::after { content: ""; display: block; width: 3px; height: 3px; margin: 2px; border-right: 1px solid #222; border-bottom: 1px solid #222; }
.g-clip { width: 171px; }
.g-font { width: 207px; }
.g-align { width: 262px; }
.g-num { width: 141px; }
.g-style { width: 719px; }
.g-cells { width: 145px; }
.g-edit { width: 233px; }
.collapse { position: absolute; right: 11px; bottom: 6px; }
.rrow { display: flex; align-items: center; gap: 4px; white-space: nowrap; height: 23px; }
.clip { display: flex; }
.paste { width: 34px; margin-left: 8px; display: flex; flex-direction: column; align-items: center; padding-top: 4px; }
.big-lbl { text-align: center; line-height: 16px; white-space: nowrap; display: block; color: #262626; }
.big-lbl.off { color: #7a7a7a; margin-top: 5px; }
.paste .caret { margin-top: 9px; }
.cliplist { margin-left: 8px; display: flex; flex-direction: column; margin-top: -1px; }
.cliplist .rrow { width: 118px; }
.stackb { padding: 7px 0 0 3px; }
.frow1 { display: flex; align-items: center; height: 23px; }
.combo { height: 23px; background: #c9c9c9; border: 1px solid #7f7f7f; display: flex; align-items: center; justify-content: space-between; padding: 0 4px 0 3px; font-size: 12px; color: #333; }
.fname { width: 111px; }
.fsize { width: 43px; margin-left: -1px; padding-left: 3px; }
.grow { width: 22px; font-size: 15px; color: #333; position: relative; text-align: center; margin-left: 2px; line-height: 23px; }
.grow.small { font-size: 12px; margin-left: 0; }
.tri { position: absolute; right: 3px; top: 3px; border-left: 2.500px solid transparent; border-right: 2.500px solid transparent; }
.tri.up { border-bottom: 3px solid #2b5c9e; }
.tri.down { border-top: 3px solid #2b5c9e; }
.frow2 { display: flex; align-items: center; margin-top: 10px; height: 22px; }
.fmt { font-family: "Liberation Sans", sans-serif; font-size: 13px; color: #222; width: 22px; text-align: center; }
.frow2 em { font-family: "Liberation Serif", serif; font-weight: bold; }
.frow2 .caret { margin: 0 0 0 2px; }
.vsep { width: 1px; height: 22px; background: #8f8f8f; margin: 0 7px; }
.fontcolor { font-size: 14px; font-weight: 600; color: #222; border-bottom: 4px solid #f00; line-height: 15px; width: 16px; text-align: center; margin-left: 5px; }
.frow2 .border-ic + .caret { margin-left: 7px; }
.frow2 .fill-ic + .caret { margin-left: 3px; }
.frow2 .fontcolor + .caret { margin-left: 6px; }
.alignbody { display: flex; padding-left: 7px; }
.aligngrid { width: 112px; padding-top: 7px; flex: none; }
.arow { display: flex; align-items: center; gap: 7px; height: 23px; }
.arow.first .on { margin-left: -3px; width: 22px; height: 23px; background: #8f8f8f; display: flex; align-items: center; justify-content: center; }
.arow .vsep { margin: 0; height: 20px; }
.arow + .arow { margin-top: 9px; }
.ln { fill: none; stroke: #333; }
.blacksep { width: 1px; height: 56px; margin: 6px 0 0 7px; background: #333; }
.wrapcol { display: flex; flex-direction: column; padding: 7px 0 0 7px; gap: 9px; }
.wrapcol .rrow { height: 22px; }
.fmtbox { width: 131px; }
.nrow { display: flex; align-items: center; margin-top: 8px; height: 24px; padding-left: 4px; }
.nrow .caret { margin-left: 5px; }
.pct { font-size: 17px; width: 18px; margin-left: 7px; text-align: center; color: #333; }
.thou { font-size: 10px; margin-left: 4px; color: #333; }
.nrow .vsep { margin: 0 6px 0 6px; }
.dec { width: 17px; height: 20px; display: flex; flex-direction: column; align-items: flex-end; font-size: 9px; line-height: 10px; margin-right: 5px; color: #222; font-family: "Liberation Sans", sans-serif; }
.dl { display: block; white-space: nowrap; height: 10px; }
.arw { color: #2b5c9e; font-family: "DejaVu Sans", sans-serif; font-size: 8px; }
.stylebody { display: flex; }
.bigbtn { display: flex; flex-direction: column; align-items: center; position: relative; flex: none; }
.bigbtn .big-lbl { margin-top: 4px; line-height: 16px; }
.bigbtn.cf { width: 80px; padding-top: 4px; margin-left: 3px; }
.bigbtn.ft { width: 78px; padding-top: 4px; }
.gallery { margin: 2px 0 0 2px; width: 546px; height: 62px; border: 1px solid #8a8a8a; background: #cfcfcf; display: flex; flex: none; }
.gcells { width: 531px; display: grid; grid-template-columns: repeat(5, 100px); column-gap: 6px; row-gap: 6px; padding: 5px 0 0 3px; grid-auto-rows: 22px; }
.gc { font-family: "Liberation Sans", sans-serif; font-size: 14px; line-height: 22px; padding-left: 5px; white-space: nowrap; overflow: hidden; background: #fff; }
.note-st { color: #7f7f7f; font-style: italic; }
.warn-st { color: #f00; }
.gc.title-st { color: #44546a; font-size: 24px; line-height: 16px; padding-left: 5px; }
.att-st { background: #ffc; color: #000; border: 1px solid #a8a8a8; padding-left: 3px; line-height: 20px; }
.bad-st { background: #ffc7ce; color: #9c0006; padding-left: 3px; }
.norm-st { color: #000; outline: 3px solid #969696; }
.good-st { background: #c6efce; color: #006100; padding-left: 3px; }
.neut-st { background: #ffeb9c; color: #9c5700; padding-left: 3px; }
.input-st { background: #fc9; color: #3f3f76; border: 1px solid #7f7f7f; padding-left: 3px; line-height: 20px; }
.gscroll { width: 14px; flex: none; display: flex; flex-direction: column; border-left: 1px solid #8a8a8a; }
.gscroll span { flex: 1; display: flex; flex-direction: column; align-items: center; justify-content: center; gap: 1px; border-bottom: 1px solid #8a8a8a; background: #c6c6c6; }
.gscroll span:last-child { border-bottom: 0; }
.bar { width: 6px; height: 1px; background: #222; }
.gscroll .caret { border-top-color: #222; }
.gscroll .caret.up { border-bottom-color: #222; border-top-color: transparent; }
.cellsbody { display: flex; padding-left: 4px; }
.bigbtn.wstaw { width: 38px; padding-top: 3px; }
.bigbtn.usun { width: 46px; padding-top: 3px; margin-left: 1px; }
.bigbtn.formatuj { width: 50px; }
.bigbtn .caret { margin-top: 7px; }
.bigbtn.wstaw .big-lbl, .bigbtn.usun .big-lbl { margin-top: 5px; }
.bigbtn.formatuj .big-lbl { margin-top: 4px; }
.editbody { display: flex; padding-left: 6px; }
.editlist { display: flex; flex-direction: column; width: 128px; margin-top: -1px; }
.editlist .rrow { gap: 5px; }
.sigma { font-family: "Liberation Serif", serif; font-size: 23px; color: #222; width: 15px; line-height: 20px; font-weight: bold; }
.bigbtn.sort { width: 48px; padding-top: 3px; }
.az { display: block; width: 32px; height: 30px; position: relative; font-family: "Liberation Sans", sans-serif; font-weight: bold; font-size: 16px; line-height: 15px; }
.az-a { color: #2b5c9e; position: absolute; left: 1px; top: 0; }
.az-z { color: #7a4da5; position: absolute; left: 1px; top: 15px; }
.az svg { position: absolute; right: 0; top: 7px; }
.bigbtn.find { width: 48px; padding-top: 3px; }

/* formula */
.formula { height: 35px; flex: none; background: #666; display: flex; padding: 10px 6px 0 5px; }
.namebox { width: 135px; height: 25px; background: #b2b2b2; border: 1px solid #3e3e3e; display: flex; align-items: center; justify-content: space-between; padding: 0 5px 0 7px; font-size: 12px; color: #444; }
.namebox .caret { border-top-color: #777; border-left-width: 4px; border-right-width: 4px; border-top-width: 4px; }
.fdots { width: 31px; display: flex; flex-direction: column; gap: 3px; align-items: center; justify-content: center; }
.fdots i, .hdots i { width: 2px; height: 2px; background: #eee; }
.fbtns { width: 109px; height: 25px; background: #b2b2b2; border: 1px solid #3e3e3e; display: flex; align-items: center; gap: 19px; padding-left: 13px; }
.fx { font-family: "Liberation Serif", serif; font-style: italic; font-size: 13px; color: #8a8a8a; font-weight: bold; }
.fbar { flex: 1; margin-left: 4px; height: 25px; background: #b2b2b2; border: 1px solid #3e3e3e; display: flex; align-items: center; justify-content: flex-end; padding-right: 4px; }

/* workbook */
.workbook { height: 803px; flex: none; display: flex; background: #666; }
.pane { width: 1900px; flex: none; padding-top: 10px; display: flex; flex-direction: column; }
.colhdr { height: 10px; flex: none; display: flex; overflow: hidden; font: 5px/10px "Liberation Sans", sans-serif; color: #d8d8d8; background: #5f5f5f; }
.colhdr span { width: 12px; flex: none; text-align: center; border-right: 1px solid #bbb; }
.colhdr .col-a { width: 93px; }
.colhdr .sel { background: #111; color: #fff; border-bottom: 1px solid #217346; }
.sheetwrap { height: 783px; flex: none; display: flex; overflow: hidden; }
.rowhdr { width: 12px; flex: none; display: flex; flex-direction: column; background: #666; font: 5px "Liberation Sans", sans-serif; color: #d0d0d0; }
.rowhdr span { height: 12px; flex: none; display: flex; align-items: center; justify-content: center; border-bottom: 1px solid #a0a0a0; }
.rowhdr .rh1 { height: 19px; }
.rowhdr .rh2 { height: 20px; }
.rowhdr .rh5 { height: 14px; }
.sheet { width: 1888px; flex: none; background: #fff; overflow: hidden; }
.frozen { height: 80px; display: flex; border-bottom: 1px solid #a6a6a6; font-family: "Liberation Sans", sans-serif; }
.code { width: 106px; flex: none; padding: 7px 0 0 2px; font-size: 10px; line-height: 12px; color: #111; }
.xbtn { font-family: "Open Sans", "Liberation Sans", sans-serif; background: #f0f0f0; border: 0; padding: 0; color: #111; box-shadow: 1px 1px 0 #808080; }
.edit { width: 95px; height: 59px; margin-top: 20px; font-size: 10.500px; font-weight: 700; }
.gap5 { height: 12px; }
.content { display: flex; }
.side { width: 105px; flex: none; padding-top: 2px; font-family: "Liberation Sans", sans-serif; font-size: 9px; color: #111; }
.val { width: 91px; height: 12px; line-height: 12px; text-align: right; }
.v71 { margin-top: 24px; }
.lab { height: 12px; line-height: 12px; padding-left: 2px; }
.l-data { margin-top: 24px; }
.actions { display: flex; flex-direction: column; gap: 9px; padding: 131px 0 0 2px; }
.act { width: 92px; height: 63px; font-size: 10.300px; line-height: 15px; }

/* map */
.map { width: 1694px; height: 730px; flex: none; padding-top: 1px; border-left: 1px solid #000; border-right: 2px solid #000; margin-left: -1px; box-shadow: inset 1px 0 0 #000;
  background:
    linear-gradient(90deg, #000 0 109px, transparent 109px 193px, #000 193px 229px, transparent 229px 1333px, #000 1333px 1369px, transparent 1369px 1525px, #000 1525px) 0 0 / 100% 2px no-repeat,
    linear-gradient(#fff 0 1px, #bfbfbf 1px);
  display: grid; grid-template-columns: repeat(141, 12px); grid-template-rows: repeat(60, 12px); font: 6px/12px "Liberation Sans", sans-serif; color: #262633; }
.grp { display: flex; align-items: flex-start; }
.stack { flex: none; display: flex; flex-direction: column; margin-right: -1px; }
.w3 { width: 37px; } .w4 { width: 49px; } .w5 { width: 61px; } .w6 { width: 73px; } .w7 { width: 85px; } .w8 { width: 97px; } .w9 { width: 109px; } .w10 { width: 121px; } .w18 { width: 217px; }
.slot { flex: none; position: relative; background: #fff; border: 1px solid #000; margin-bottom: -1px; padding-left: 1px; overflow: hidden; white-space: nowrap; }
.s3 { height: 37px; } .s4 { height: 49px; } .s5 { height: 61px; } .s6 { height: 73px; } .s7 { height: 85px; } .s8 { height: 97px; } .s9 { height: 109px; } .s17 { height: 205px; }
.slot span { display: block; height: 12px; line-height: 12px; }
.slot span:nth-child(2) { padding-left: 12px; letter-spacing: .6px; }
.slot span:nth-child(3) { letter-spacing: .4px; }
.part::before { content: ""; position: absolute; left: 6px; top: 0; width: 5px; height: 5px; background: #f00; clip-path: polygon(0 0, 100% 0, 100% 100%); }
.part::after { content: ""; position: absolute; left: 12px; top: 11px; width: 5px; height: 5px; background: #008000; clip-path: polygon(0 0, 100% 0, 0 100%); }
.slot .mini { font-size: 4.600px; letter-spacing: 0; }
.tiny span:first-child { font-size: 4.400px; }
.g-klt { grid-area: 1 / 10; }
.g-wolne { grid-area: 33 / 13; }
.g-top { grid-area: 1 / 20; }
.g-store { grid-area: 1 / 78; }
.g-out { grid-area: 1 / 115; }
.g-1 { grid-area: 22 / 24; }
.g-2 { grid-area: 22 / 39; }
.g-3 { grid-area: 22 / 54; }
.g-4 { grid-area: 22 / 69; }
.g-5 { grid-area: 22 / 84; }
.g-6 { grid-area: 22 / 99; }
.g-7 { grid-area: 31 / 114; }
.g-7b { grid-area: 55 / 122; }
.g-ra { grid-area: 8 / 129; }
.g-rb { grid-area: 14 / 129; }
.g-rc { grid-area: 22 / 129; }
.g-rd { grid-area: 28 / 129; }
.g-re { grid-area: 46 / 129; }

/* vertical scrollbar */
.vscroll { width: 20px; flex: none; display: flex; flex-direction: column; padding: 14px 3px 0 3px; align-items: stretch; background: #666; }
.sbtn { height: 15px; flex: none; background: #a6a6a6; border: 1px solid #444; display: flex; align-items: center; justify-content: center; }
.vthumb { height: 139px; flex: none; margin-top: 1px; background: #999; border: 1px solid #555; }
.vtrack { flex: 1; background: #5c5c5c; }

/* sheet tabs */
.sheetbar { height: 28px; flex: none; background: #686868; border-top: 1px solid #9a9a9a; display: flex; align-items: flex-start; font-size: 12.500px; color: #e2e2e2; }
.navs { width: 100px; height: 27px; display: flex; align-items: center; gap: 23px; padding-left: 27px; flex: none; }
.tsep { width: 1px; height: 20px; margin-top: 3px; background: #9c9c9c; }
.stab { height: 23px; line-height: 23px; white-space: nowrap; flex: none; }
.mapa { width: 54px; height: 22px; margin: 2px 1px 0 1px; background: #000; color: #fff; text-align: center; line-height: 22px; }
.widok { width: 64px; height: 23px; background: #fff; color: #217346; font-weight: 700; text-align: center; border-bottom: 2px solid #217346; line-height: 22px; }
.s-snr { margin-left: 12px; width: 105px; }
.s-wym { margin-left: 15px; width: 97px; }
.s-lis { margin-left: 16px; width: 112px; }
.s-tab { margin-left: 12px; width: 65px; }
.s-anl { margin-left: 13px; width: 83px; }
.s-sq { margin-left: 13px; width: 54px; }
.s-lin { margin-left: 13px; width: 62px; }
.s-buf { margin-left: 13px; width: 44px; }
.s-zaz { margin-left: 16px; width: 125px; }
.addsheet { margin: 5px 0 0 31px; }
.hdots { width: 4px; margin: 6px 0 0 336px; display: flex; flex-direction: column; gap: 3px; padding-top: 1px; align-items: center; }
.hscroll { width: 395px; height: 15px; margin: 6px 0 0 11px; display: flex; background: #585858; border: 1px solid #444; flex: none; }
.hbtn { width: 15px; flex: none; background: #8a8a8a; display: flex; align-items: center; justify-content: center; }
.hthumb { width: 113px; flex: none; margin-left: 1px; background: #999; border-right: 1px solid #444; }
.htrack { flex: 1; }

/* status */
.status { height: 22px; flex: none; background: #555; border-top: 1px solid #444; display: flex; align-items: center; color: #e2e2e2; font-size: 11.500px; }
.ready { margin-left: 7px; width: 61px; }
.views { margin-left: 1553px; display: flex; height: 21px; width: 116px; flex: none; }
.view { width: 38px; flex: none; display: flex; align-items: center; justify-content: center; margin-right: 6px; }
.view.on { background: #3f3f3f; margin-right: 1px; }
.zbtn { width: 12px; flex: none; text-align: center; font-size: 15px; font-weight: 700; color: #fff; line-height: 20px; }
.slider { width: 100px; height: 1px; background: #e0e0e0; position: relative; margin: 0 2px; flex: none; }
.knob { position: absolute; left: 15px; top: -7px; width: 4px; height: 14px; background: #f2f2f2; }
.tick { position: absolute; left: 49px; top: -3px; width: 1px; height: 7px; background: #e0e0e0; }
.zoomval { margin-left: 13px; font-size: 12px; white-space: nowrap; }
.taskstrip { height: 2px; flex: none; background: #252525; padding-left: 48px; }
.taskstrip span { display: block; width: 343px; height: 2px; background: #d8d8d8; }
```
